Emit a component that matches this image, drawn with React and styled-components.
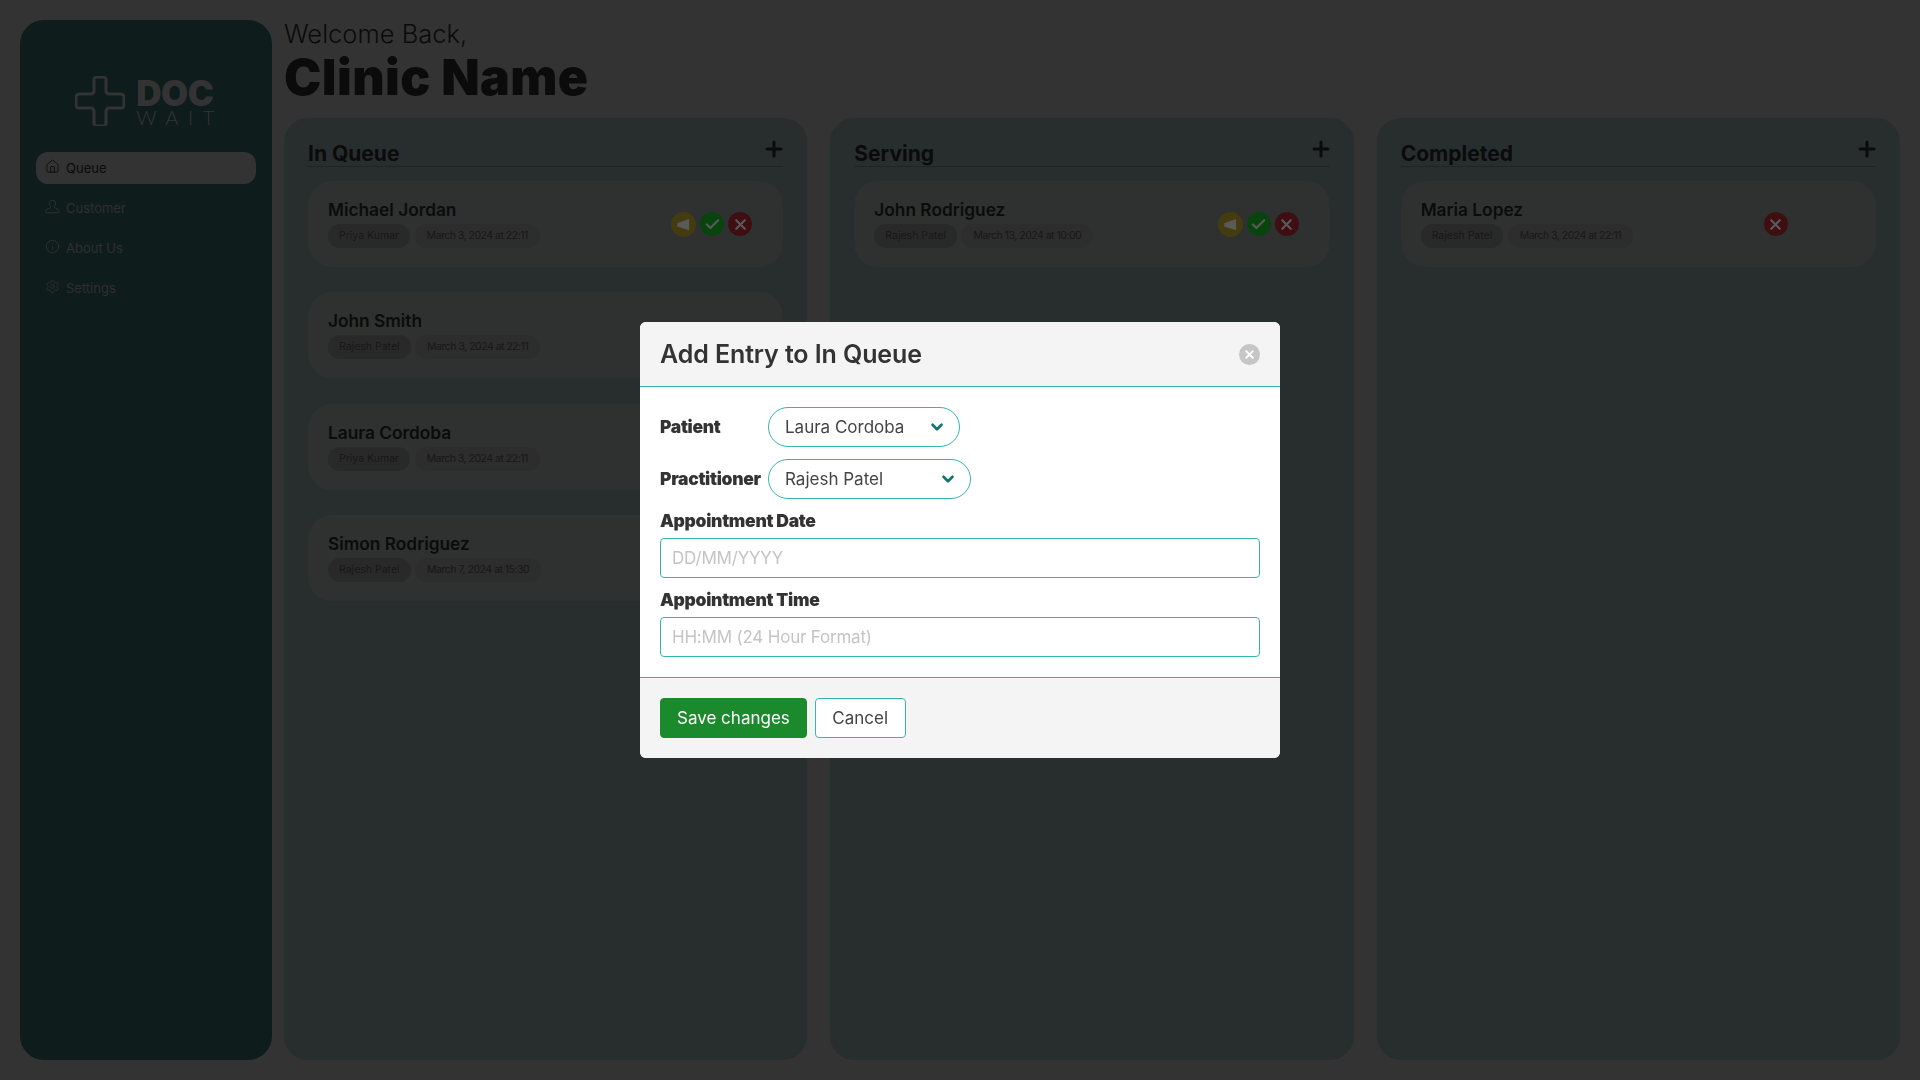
import React from "react";
import styled, { createGlobalStyle } from "styled-components";
import { Check, ChevronDown, House, Info, Plus, Settings, X } from "lucide-react";

const GlobalStyle = createGlobalStyle`
  html, body {
    margin: 0;
    padding: 0;
    background: #929292;
    font-family: Inter, "Open Sans", sans-serif;
  }
  * {
    box-sizing: border-box;
  }
`;

const Page = styled.div`
  display: flex;
  gap: 12px;
  height: 1080px;
  padding: 20px;
  overflow: hidden;
`;

const Sidebar = styled.aside`
  width: 252px;
  flex-shrink: 0;
  padding: 54px 16px 0;
  border-radius: 24px;
  background: #285150;
`;

const Logo = styled.div`
  display: flex;
  justify-content: center;
  align-items: center;
  gap: 11px;
  margin-bottom: 25px;
  padding-left: 7px;
  color: #929292;
`;

const LogoText = styled.div`
  display: flex;
  flex-direction: column;
  margin-top: 5px;
`;

const LogoDoc = styled.span`
  font-size: 35px;
  line-height: 28px;
  font-weight: 900;
  letter-spacing: -0.5px;
`;

const LogoWait = styled.span`
  font-family: Lato, sans-serif;
  font-size: 20px;
  line-height: 20px;
  font-weight: 300;
  letter-spacing: 9.5px;
`;

const NavList = styled.nav`
  display: flex;
  flex-direction: column;
  gap: 8px;
`;

const NavItem = styled.a`
  display: flex;
  align-items: center;
  gap: 6px;
  height: 32px;
  padding: 0 9px;
  border-radius: 12px;
  font-size: 13px;
  background: ${(p) => (p.$active ? "#929292" : "transparent")};
  color: ${(p) => (p.$active ? "#222222" : "#868686")};
  svg {
    width: 15px;
    height: 15px;
    margin-top: -4px;
    stroke-width: 1.5;
  }
`;

const Main = styled.main`
  flex: 1;
  min-width: 0;
  display: flex;
  flex-direction: column;
`;

const Welcome = styled.div`
  margin-top: -1px;
  font-size: 25.5px;
  line-height: 30px;
  font-weight: 300;
  color: #222222;
`;

const ClinicName = styled.h1`
  margin: 0 0 13px;
  font-size: 50px;
  line-height: 56px;
  font-weight: 900;
  letter-spacing: 0.4px;
  color: #222222;
`;

const Board = styled.div`
  flex: 1;
  display: grid;
  grid-template-columns: repeat(3, 1fr);
  gap: 23px;
`;

const Column = styled.section`
  padding: 22px 24px;
  border-radius: 24px;
  background: #728383;
`;

const ColumnHeader = styled.div`
  display: flex;
  justify-content: space-between;
  align-items: flex-start;
  height: 27px;
  margin-bottom: 14px;
  border-bottom: 1px solid #4f6a6a;
`;

const ColumnTitle = styled.h2`
  margin: 0;
  font-size: 21px;
  line-height: 27px;
  font-weight: 700;
  color: #222222;
`;

const AddButton = styled.span`
  display: flex;
  margin: -3px -3px 0 0;
  color: #222222;
  svg {
    width: 24px;
    height: 24px;
    stroke-width: 3;
  }
`;

const CardList = styled.div`
  display: flex;
  flex-direction: column;
  gap: 25.4px;
`;

const Card = styled.article`
  display: flex;
  justify-content: space-between;
  align-items: center;
  height: 86px;
  padding: 0 0 0 20px;
  border-radius: 24px;
  background: #848c89;
`;

const CardName = styled.div`
  margin: -1px 0 2px;
  font-size: 17.3px;
  line-height: 24px;
  font-weight: 600;
  color: #222222;
`;

const ChipRow = styled.div`
  display: flex;
  gap: 4.5px;
  margin-bottom: 1px;
`;

const Chip = styled.span`
  height: 24px;
  padding: 0 ${(p) => (p.$strong ? "11px" : "12px")};
  border-radius: 12px;
  font-size: 10.5px;
  line-height: 24px;
  color: #454545;
  letter-spacing: ${(p) => (p.$strong ? "0" : "-0.5px")};
  background: ${(p) => (p.$strong ? "#757575" : "#808080")};
`;

const Actions = styled.div`
  width: 112px;
  flex-shrink: 0;
  display: flex;
  align-items: center;
  gap: 4px;
`;

const RoundButton = styled.span`
  display: flex;
  justify-content: center;
  align-items: center;
  width: ${(p) => (p.$wide ? "25px" : "24px")};
  height: ${(p) => (p.$wide ? "25px" : "24px")};
  border-radius: 50%;
  color: #ffffff;
  background: ${(p) => p.$color};
  svg {
    width: ${(p) => (p.$wide ? "15px" : "17px")};
    height: ${(p) => (p.$wide ? "15px" : "17px")};
    stroke-width: 3;
  }
`;

const Overlay = styled.div`
  position: fixed;
  inset: 0;
  display: flex;
  justify-content: center;
  align-items: center;
  background: rgba(0, 0, 0, 0.65);
`;

const Modal = styled.div`
  width: 640px;
  overflow: hidden;
  border-radius: 6px;
  background: #ffffff;
  color: #333333;
`;

const ModalHeader = styled.header`
  display: flex;
  justify-content: space-between;
  align-items: center;
  height: 65px;
  padding: 0 20px;
  border-bottom: 1px solid #35b5ae;
  background: #f4f4f4;
`;

const ModalTitle = styled.h3`
  margin: 0;
  font-size: 25px;
  font-weight: 600;
  letter-spacing: -0.1px;
`;

const CloseButton = styled.span`
  display: flex;
  justify-content: center;
  align-items: center;
  width: 21px;
  height: 21px;
  border-radius: 50%;
  color: #ffffff;
  background: #c6c6c6;
  svg {
    width: 13px;
    height: 13px;
    stroke-width: 3.5;
  }
`;

const ModalBody = styled.div`
  display: flex;
  flex-direction: column;
  padding: 20px 20px 20px;
`;

const SelectRow = styled.div`
  display: flex;
  align-items: center;
  height: 40px;
  margin-bottom: 12px;
`;

const FieldLabel = styled.label`
  width: 108px;
  font-size: 17.5px;
  line-height: 24px;
  font-weight: 900;
  letter-spacing: -0.3px;
`;

const Select = styled.div`
  display: flex;
  justify-content: space-between;
  align-items: center;
  width: ${(p) => p.$width}px;
  height: 40px;
  padding: 0 13px 0 16px;
  border: 1px solid #35b5ae;
  border-radius: 20px;
  font-size: 17px;
  color: #444444;
  background: #ffffff;
  svg {
    width: 18px;
    height: 18px;
    stroke-width: 3.5;
    color: #0f766e;
  }
`;

const StackedLabel = styled(FieldLabel)`
  width: auto;
  margin: -2px 0 5px;
`;

const TextInput = styled.input`
  width: 100%;
  height: 40px;
  margin-bottom: 12px;
  padding: 0 11px;
  border: 1px solid #35b5ae;
  border-radius: 4px;
  font-family: inherit;
  font-size: 17px;
  outline: none;
  &:last-child {
    margin-bottom: 0;
  }
  &::placeholder {
    color: #c4c4c4;
    letter-spacing: -0.2px;
    opacity: 1;
  }
`;

const ModalFooter = styled.footer`
  display: flex;
  align-items: center;
  gap: 8px;
  height: 81px;
  padding: 0 20px;
  border-top: 1px solid #35b5ae;
  background: #f4f4f4;
`;

const FooterButton = styled.button`
  height: 40px;
  padding: 0 ${(p) => (p.$primary ? "16px" : "16.5px")};
  border: 1px solid ${(p) => (p.$primary ? "#1b8a2d" : "#35b5ae")};
  border-radius: 4px;
  font-family: inherit;
  font-size: 17px;
  color: ${(p) => (p.$primary ? "#ffffff" : "#444444")};
  background: ${(p) => (p.$primary ? "#1b8a2d" : "#ffffff")};
`;

function CrossMark() {
  return (
    <svg width="50" height="50" viewBox="0 0 50 50" fill="none" stroke="currentColor" strokeWidth="3">
      <path d="M19 3a3 3 0 0 1 3-2h6a3 3 0 0 1 3 2v12a3 3 0 0 0 3 3h12a3 3 0 0 1 3 3v8a3 3 0 0 1-3 3H34a3 3 0 0 0-3 3v12a3 3 0 0 1-3 3h-6a3 3 0 0 1-3-3V35a3 3 0 0 0-3-3H4a3 3 0 0 1-3-3v-8a3 3 0 0 1 3-3h12a3 3 0 0 0 3-3z" />
    </svg>
  );
}

function Megaphone() {
  return (
    <svg viewBox="0 0 24 24" fill="currentColor" stroke="none">
      <path d="M2 10l19-7v18L2 15z" />
    </svg>
  );
}

function PersonBust() {
  return (
    <svg viewBox="0 0 24 24" fill="none" stroke="currentColor" strokeLinejoin="round">
      <path d="M12 2a5 5 0 0 0-5 5c0 2.2.8 3.8 2 5v2l-6 2.5c-1.2.6-1.5 2.5-1.5 5.5h21c0-3-.3-4.9-1.5-5.5L15 14v-2c1.2-1.2 2-2.8 2-5a5 5 0 0 0-5-5z" />
    </svg>
  );
}

const navItems = [
  { label: "Queue", icon: House, active: true },
  { label: "Customer", icon: PersonBust },
  { label: "About Us", icon: Info },
  { label: "Settings", icon: Settings },
];

const columns = [
  {
    title: "In Queue",
    actions: ["notify", "done", "remove"],
    entries: [
      { name: "Michael Jordan", doctor: "Priya Kumar", time: "March 3, 2024 at 22:11" },
      { name: "John Smith", doctor: "Rajesh Patel", time: "March 3, 2024 at 22:11" },
      { name: "Laura Cordoba", doctor: "Priya Kumar", time: "March 3, 2024 at 22:11" },
      { name: "Simon Rodriguez", doctor: "Rajesh Patel", time: "March 7, 2024 at 15:30" },
    ],
  },
  {
    title: "Serving",
    actions: ["notify", "done", "remove"],
    entries: [{ name: "John Rodriguez", doctor: "Rajesh Patel", time: "March 13, 2024 at 10:00" }],
  },
  {
    title: "Completed",
    actions: ["remove"],
    entries: [{ name: "Maria Lopez", doctor: "Rajesh Patel", time: "March 3, 2024 at 22:11" }],
  },
];

function ActionButton({ kind }) {
  if (kind === "notify") {
    return (
      <RoundButton $wide $color="#c4a92e">
        <Megaphone />
      </RoundButton>
    );
  }
  if (kind === "done") {
    return (
      <RoundButton $color="#1cc228">
        <Check />
      </RoundButton>
    );
  }
  return (
    <RoundButton $color="#b32a38">
      <X />
    </RoundButton>
  );
}

export default function App() {
  return (
    <>
      <GlobalStyle />
      <Page>
        <Sidebar>
          <Logo>
            <CrossMark />
            <LogoText>
              <LogoDoc>DOC</LogoDoc>
              <LogoWait>WAIT</LogoWait>
            </LogoText>
          </Logo>
          <NavList>
            {navItems.map((item) => (
              <NavItem key={item.label} $active={item.active}>
                <item.icon />
                {item.label}
              </NavItem>
            ))}
          </NavList>
        </Sidebar>
        <Main>
          <Welcome>Welcome Back,</Welcome>
          <ClinicName>Clinic Name</ClinicName>
          <Board>
            {columns.map((column) => (
              <Column key={column.title}>
                <ColumnHeader>
                  <ColumnTitle>{column.title}</ColumnTitle>
                  <AddButton>
                    <Plus />
                  </AddButton>
                </ColumnHeader>
                <CardList>
                  {column.entries.map((entry) => (
                    <Card key={entry.name}>
                      <div>
                        <CardName>{entry.name}</CardName>
                        <ChipRow>
                          <Chip $strong>{entry.doctor}</Chip>
                          <Chip>{entry.time}</Chip>
                        </ChipRow>
                      </div>
                      <Actions>
                        {column.actions.map((kind) => (
                          <ActionButton key={kind} kind={kind} />
                        ))}
                      </Actions>
                    </Card>
                  ))}
                </CardList>
              </Column>
            ))}
          </Board>
        </Main>
      </Page>
      <Overlay>
        <Modal>
          <ModalHeader>
            <ModalTitle>Add Entry to In Queue</ModalTitle>
            <CloseButton>
              <X />
            </CloseButton>
          </ModalHeader>
          <ModalBody>
            <SelectRow>
              <FieldLabel>Patient</FieldLabel>
              <Select $width={192}>
                Laura Cordoba
                <ChevronDown />
              </Select>
            </SelectRow>
            <SelectRow>
              <FieldLabel>Practitioner</FieldLabel>
              <Select $width={203}>
                Rajesh Patel
                <ChevronDown />
              </Select>
            </SelectRow>
            <StackedLabel>Appointment Date</StackedLabel>
            <TextInput placeholder="DD/MM/YYYY" />
            <StackedLabel>Appointment Time</StackedLabel>
            <TextInput placeholder="HH:MM (24 Hour Format)" />
          </ModalBody>
          <ModalFooter>
            <FooterButton $primary>Save changes</FooterButton>
            <FooterButton>Cancel</FooterButton>
          </ModalFooter>
        </Modal>
      </Overlay>
    </>
  );
}
